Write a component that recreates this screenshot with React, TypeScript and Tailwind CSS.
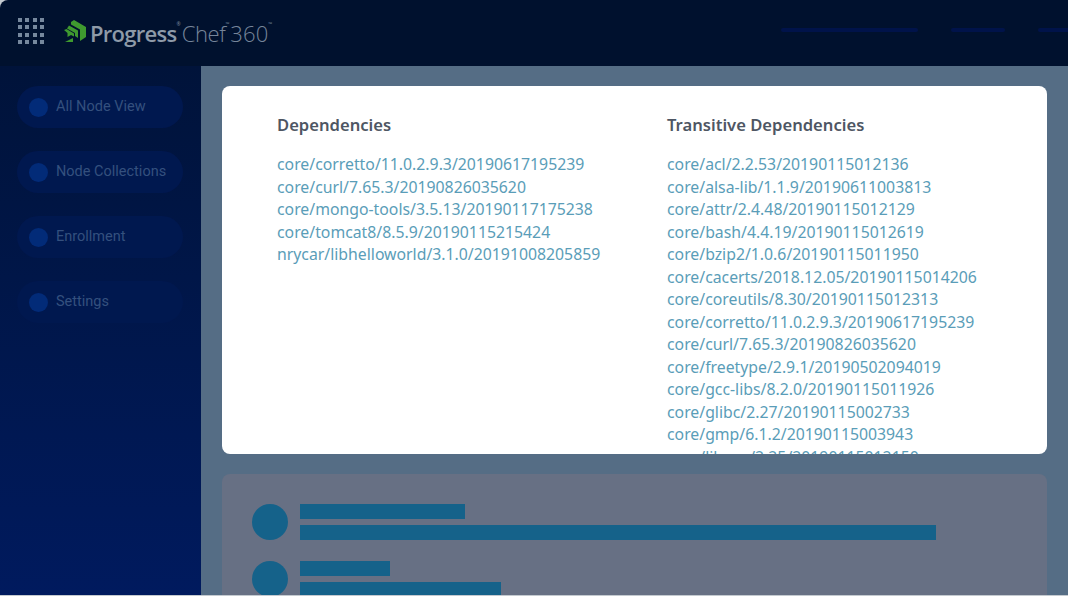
const navItems = ['All Node View', 'Node Collections', 'Enrollment', 'Settings'];

const deps = [
  'core/corretto/11.0.2.9.3/20190617195239',
  'core/curl/7.65.3/20190826035620',
  'core/mongo-tools/3.5.13/20190117175238',
  'core/tomcat8/8.5.9/20190115215424',
  'nrycar/libhelloworld/3.1.0/20191008205859',
];

const transitive = [
  'core/acl/2.2.53/20190115012136',
  'core/alsa-lib/1.1.9/20190611003813',
  'core/attr/2.4.48/20190115012129',
  'core/bash/4.4.19/20190115012619',
  'core/bzip2/1.0.6/20190115011950',
  'core/cacerts/2018.12.05/20190115014206',
  'core/coreutils/8.30/20190115012313',
  'core/corretto/11.0.2.9.3/20190617195239',
  'core/curl/7.65.3/20190826035620',
  'core/freetype/2.9.1/20190502094019',
  'core/gcc-libs/8.2.0/20190115011926',
  'core/glibc/2.27/20190115002733',
  'core/gmp/6.1.2/20190115003943',
  'core/libcap/2.25/20190115012150',
];

function Logo() {
  return (
    <svg width="23" height="23" viewBox="0 0 23 23" className="shrink-0">
      <path d="M10 0 L22 7 V17 L16 21 V9.5 L7 4.5 V2 Z" fill="#3f9a2f" />
      <path d="M5 5.5 L14 10.5 V18 L11 16 V13 L3 8.5 Z" fill="#3f9a2f" />
      <path d="M0 10 L2.5 9 L10 13.5 V16.5 L7 15 L3.5 17 V13 Z" fill="#3f9a2f" />
      <path d="M1 22 L9 18 L9 22 Z" fill="#3f9a2f" />
    </svg>
  );
}

function DepList({ title, items }: { title: string; items: string[] }) {
  return (
    <div>
      <h3 className="text-[16.6px] leading-[24px] font-semibold text-[#4e5663]">{title}</h3>
      <ul className="mt-[16px]">
        {items.map((item) => (
          <li key={item} className="text-[15.8px] leading-[22.5px] whitespace-nowrap text-[#5a9db8]">
            {item}
          </li>
        ))}
      </ul>
    </div>
  );
}

function SkeletonRow({ top, bottom }: { top: string; bottom: string }) {
  return (
    <div className="flex items-center gap-3">
      <div className="w-9 h-9 rounded-full bg-[#15628a] shrink-0" />
      <div className="flex flex-col gap-[6px]">
        <div className={`h-[15px] bg-[#15628a] ${top}`} />
        <div className={`h-[15px] bg-[#15628a] ${bottom}`} />
      </div>
    </div>
  );
}

export default function App() {
  return (
    <div className="w-[1068px] h-[596px] overflow-hidden bg-[#c4cad0] font-['Noto_Sans',sans-serif]">
      <div className="h-[595px] rounded-tl-lg overflow-hidden flex flex-col bg-[#00112e]">
        {/* Header */}
        <header className="h-[66px] shrink-0 flex items-center pl-[18px] overflow-hidden">
          <div className="grid grid-cols-4 gap-[3.3px] -mt-[4px]">
            {Array.from({ length: 16 }).map((_, i) => (
              <span key={i} className="w-[4px] h-[4px] bg-[#76889d]" />
            ))}
          </div>
          <div className="ml-[20px] -mt-[4px] flex items-center">
            <Logo />
            <span className="ml-[3px] mt-[4px] text-[22px] font-semibold tracking-[-0.7px] text-[#8e9aa8] font-['Open_Sans',sans-serif]">
              Progress
            </span>
            <span className="text-[5px] self-start mt-[8px] text-[#76859a]">®</span>
            <span className="ml-[1px] mt-[4px] text-[22px] font-light tracking-[-0.4px] text-[#76859a] font-['Open_Sans',sans-serif]">
              Chef
            </span>
            <span className="text-[5px] self-start mt-[8px] text-[#76859a]">™</span>
            <span className="ml-[1px] mt-[4px] text-[22px] font-light tracking-[0.1px] text-[#76859a] font-['Open_Sans',sans-serif]">
              360
            </span>
            <span className="text-[5px] self-start mt-[8px] text-[#76859a]">™</span>
          </div>
          <div className="ml-auto -mt-[6px] flex gap-[33px] -mr-[50px]">
            <div className="w-[137px] h-[4px] rounded-full bg-[#00134a]" />
            <div className="w-[54px] h-[4px] rounded-full bg-[#00134a]" />
            <div className="w-[80px] h-[4px] rounded-full bg-[#00134a]" />
          </div>
        </header>

        <div className="flex-1 flex min-h-0">
          {/* Sidebar */}
          <aside className="w-[201px] shrink-0 pt-[20px] px-[17px] flex flex-col gap-[23px] bg-gradient-to-b from-[#00133a] to-[#001a5e]">
            {navItems.map((item) => (
              <div key={item} className="h-[42px] w-[166px] rounded-full bg-[#00184f] flex items-center pl-[12px]">
                <span className="w-[19px] h-[19px] rounded-full bg-[#022b78] shrink-0" />
                <span className="ml-[8px] text-[14.5px] whitespace-nowrap font-['Roboto',sans-serif] text-[#34507e]">{item}</span>
              </div>
            ))}
          </aside>

          {/* Main */}
          <main className="flex-1 bg-[#556d85] pt-[20px] pl-[21px] pr-[21px] flex flex-col gap-[20px] overflow-hidden">
            <section className="h-[368px] shrink-0 rounded-lg bg-white overflow-hidden flex pt-[27px] pl-[55px]">
              <div className="w-[390px] shrink-0">
                <DepList title="Dependencies" items={deps} />
              </div>
              <DepList title="Transitive Dependencies" items={transitive} />
            </section>
            <section className="flex-1 rounded-t-lg bg-[#677084] pt-[30px] pl-[30px] flex flex-col gap-[21px]">
              <SkeletonRow top="w-[165px]" bottom="w-[636px]" />
              <SkeletonRow top="w-[90px]" bottom="w-[201px]" />
            </section>
          </main>
        </div>
      </div>
    </div>
  );
}
